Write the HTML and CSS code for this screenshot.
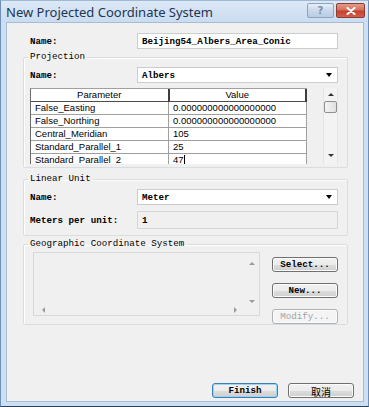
FILE: index.html
```html
<!DOCTYPE html>
<html lang="en">
<head>
  <meta charset="UTF-8">
  <title>New Projected Coordinate System</title>
  <link rel="stylesheet" href="styles.css">
</head>
<body>

  <div class="window">
    <div class="titlebar">
      <span class="title">New Projected Coordinate System</span>
      <div class="caption-buttons">
        <span class="cap-btn cap-help">?</span>
        <span class="cap-btn cap-close">
          <svg width="10" height="8" viewBox="0 0 10 8"><path d="M1.5 1 L8.5 7 M8.5 1 L1.5 7" stroke="#fff" stroke-width="2" stroke-linecap="round"/></svg>
        </span>
      </div>
    </div>

    <div class="client">
      <div class="field-row top-name">
        <label class="lbl">Name:</label>
        <div class="textbox">Beijing54_Albers_Area_Conic</div>
      </div>

      <fieldset class="group group-proj">
        <legend>Projection</legend>
        <div class="field-row">
          <label class="lbl">Name:</label>
          <div class="combo"><span>Albers</span><span class="drop-arrow"></span></div>
        </div>
        <div class="params">
          <div class="grid">
            <table>
              <thead>
                <tr><th>Parameter</th><th>Value</th></tr>
              </thead>
              <tbody>
                <tr><td>False_Easting</td><td>0.000000000000000000</td></tr>
                <tr><td>False_Northing</td><td>0.000000000000000000</td></tr>
                <tr><td>Central_Meridian</td><td>105</td></tr>
                <tr><td>Standard_Parallel_1</td><td>25</td></tr>
                <tr><td>Standard_Parallel_2</td><td>47<span class="caret"></span></td></tr>
              </tbody>
            </table>
          </div>
          <div class="vscroll">
            <span class="arrow-up"></span>
            <span class="thumb"></span>
            <span class="track"></span>
            <span class="arrow-down"></span>
          </div>
        </div>
      </fieldset>

      <fieldset class="group group-unit">
        <legend>Linear Unit</legend>
        <div class="field-row">
          <label class="lbl">Name:</label>
          <div class="combo"><span>Meter</span><span class="drop-arrow"></span></div>
        </div>
        <div class="field-row">
          <label class="lbl">Meters per unit:</label>
          <div class="textbox readonly">1</div>
        </div>
      </fieldset>

      <fieldset class="group group-gcs">
        <legend>Geographic Coordinate System</legend>
        <div class="gcs-body">
          <div class="listbox">
            <div class="list-content"></div>
            <div class="list-vbar">
              <span class="arrow-up gray"></span>
              <span class="arrow-down gray"></span>
            </div>
            <div class="list-hbar">
              <span class="arrow-left"></span>
              <span class="arrow-right"></span>
            </div>
            <div class="list-corner"></div>
          </div>
          <div class="gcs-buttons">
            <button class="btn">Select...</button>
            <button class="btn">New...</button>
            <button class="btn" disabled>Modify...</button>
          </div>
        </div>
      </fieldset>

      <div class="footer">
        <button class="btn btn-default">Finish</button>
        <button class="btn btn-cjk">取消</button>
      </div>
    </div>
  </div>

</body>
</html>
```

FILE: styles.css
```css
* {
  margin: 0;
  padding: 0;
  box-sizing: border-box;
}

html {
  background: #fff;
}

body {
  width: 369px;
  height: 407px;
  overflow: hidden;
}

.window {
  width: 369px;
  height: 407px;
  display: flex;
  flex-direction: column;
  background: #cddff2;
  border: 1px solid #6f8fb2;
  border-bottom-color: #2b3f55;
  border-top-color: #9fb8d3;
  padding: 0 4px 4px 5px;
}

.titlebar {
  height: 21px;
  display: flex;
  align-items: center;
  justify-content: space-between;
  margin: 0 -4px 0 -5px;
  padding: 0 3px 0 5px;
  background: linear-gradient(#dce8f6, #cadcf0);
}

.title {
  font-family: "Noto Sans", sans-serif;
  font-size: 13px;
  color: #1e3553;
}

.caption-buttons {
  display: flex;
  gap: 2px;
  align-self: flex-start;
  margin-top: 2px;
}

.cap-btn {
  height: 15px;
  display: flex;
  align-items: center;
  justify-content: center;
  border-radius: 2px;
}

.cap-help {
  width: 27px;
  border: 1px solid #8ba4c2;
  background: linear-gradient(#e6eef8, #c9d8ea 50%, #b9cce3);
  color: #7a8fa8;
  font-family: "DejaVu Sans", sans-serif;
  font-size: 10px;
  font-weight: bold;
}

.cap-close {
  width: 29px;
  border: 1px solid #8c3b32;
  background: linear-gradient(#e39c8a, #d4705c 45%, #c5412f 55%, #d55e46);
}

.client {
  flex: 1;
  display: flex;
  flex-direction: column;
  background: #f0f0f0;
  border: 1px solid #a7bbd2;
  padding: 10px 15px 3px 16px;
  font-family: "Liberation Mono", monospace;
  font-size: 9.2px;
  color: #000;
}

.field-row {
  display: flex;
  align-items: center;
}

.lbl {
  width: 107px;
  font-weight: bold;
}

.top-name {
  margin-left: 7px;
}

.textbox,
.combo {
  width: 201px;
  height: 16px;
  background: #fff;
  border: 1px solid #c9cdd2;
  display: flex;
  align-items: center;
  padding-left: 4px;
  font-weight: bold;
}

.textbox.readonly {
  height: 18px;
  background: #f0f0f0;
  border-color: #d6d6d6;
}

.combo {
  justify-content: space-between;
  padding-right: 5px;
}

.drop-arrow {
  width: 0;
  height: 0;
  border-left: 3.5px solid transparent;
  border-right: 3.5px solid transparent;
  border-top: 4px solid #000;
}

.group {
  border: 1px solid #d8dde2;
  border-radius: 2px;
  padding: 0 0 0 6px;
  box-shadow: inset 1px 1px 0 #fff;
}

.group legend {
  padding: 0 2px;
  margin-left: -2px;
  line-height: 10px;
  font-weight: normal;
}

.group-proj {
  margin-top: 3px;
  height: 116px;
}

.group-proj .field-row {
  margin-top: 5px;
}

.params {
  display: flex;
  margin-top: 5px;
  height: 77px;
}

.grid {
  width: 277px;
  height: 76px;
  overflow: hidden;
  border-left: 1px solid #6b6b6b;
  border-top: 1px solid #a0a0a0;
}

.grid table {
  width: 100%;
  border-collapse: collapse;
  font-family: "Liberation Sans", sans-serif;
  font-size: 9.5px;
  table-layout: fixed;
}

.grid th,
.grid td {
  height: 13px;
  padding: 0 0 0 4px;
  background: #fff;
  border-right: 1px solid #a0a0a0;
  border-bottom: 1px solid #a0a0a0;
  text-align: left;
  white-space: nowrap;
  line-height: 11px;
}

.grid th {
  height: 12px;
  font-weight: normal;
  text-align: center;
  padding: 0;
  border-bottom: 1px solid #4d4d4d;
  border-right: 2px solid #3c3c3c;
}

.caret {
  display: inline-block;
  width: 1px;
  height: 10px;
  background: #000;
  vertical-align: -2px;
}

.vscroll {
  width: 15px;
  height: 77px;
  margin-left: 16px;
  display: flex;
  flex-direction: column;
  align-items: center;
  border-left: 1px solid #e6e6e6;
  border-right: 1px solid #e6e6e6;
  background: #f3f3f3;
  padding-top: 5px;
}

.arrow-up,
.arrow-down {
  width: 0;
  height: 0;
  border-left: 3px solid transparent;
  border-right: 3px solid transparent;
}

.arrow-up {
  border-bottom: 3px solid #333;
}

.arrow-down {
  border-top: 3px solid #333;
}

.arrow-up.gray {
  border-bottom-color: #9a9a9a;
}

.arrow-down.gray {
  border-top-color: #9a9a9a;
}

.vscroll .thumb {
  width: 13px;
  height: 12px;
  margin-top: 5px;
  border: 1px solid #8e8f8f;
  border-radius: 2px;
  background: linear-gradient(90deg, #f4f4f4, #e0e0e0);
}

.vscroll .track {
  flex: 1;
}

.vscroll .arrow-down {
  margin-bottom: 8px;
}

.group-unit {
  margin-top: 6px;
  height: 62px;
}

.group-unit .field-row {
  margin-top: 5px;
}

.group-unit .field-row + .field-row {
  margin-top: 6px;
}

.group-gcs {
  margin-top: 3px;
  height: 86px;
}

.gcs-body {
  display: flex;
  margin-top: 3px;
}

.listbox {
  width: 227px;
  height: 64px;
  margin-left: 3px;
  border: 1px solid #d9d9d9;
  background: #f0f0f0;
  display: grid;
  grid-template-columns: 1fr 14px;
  grid-template-rows: 1fr 9px;
}

.list-vbar {
  grid-row: 1 / 3;
  grid-column: 2;
  display: flex;
  flex-direction: column;
  align-items: center;
  justify-content: space-between;
  padding: 9px 0 12px;
}

.list-content {
  grid-row: 1;
  grid-column: 1;
}

.list-hbar {
  grid-row: 2;
  grid-column: 1;
  display: flex;
  align-items: flex-start;
  justify-content: space-between;
  padding: 1px 8px 0 8px;
}

.list-corner {
  display: none;
}

.arrow-left,
.arrow-right {
  width: 0;
  height: 0;
  border-top: 3px solid transparent;
  border-bottom: 3px solid transparent;
}

.arrow-left {
  border-right: 3px solid #9a9a9a;
}

.arrow-right {
  border-left: 3px solid #9a9a9a;
}

.gcs-buttons {
  display: flex;
  flex-direction: column;
  gap: 11px;
  margin-left: 12px;
  margin-top: 5px;
}

.btn {
  width: 66px;
  height: 15px;
  border: 1px solid #707070;
  border-radius: 3px;
  background: linear-gradient(#f2f2f2, #ebebeb 50%, #dddddd 51%, #cfcfcf);
  font-family: "Liberation Mono", monospace;
  font-size: 9.2px;
  font-weight: bold;
  color: #000;
  box-shadow: inset 0 0 0 1px #fcfcfc;
}

.btn:disabled {
  border-color: #adb2b5;
  background: #f4f4f4;
  color: #a3a3a3;
  font-weight: normal;
}

.footer {
  margin-top: auto;
  margin-right: -6px;
  display: flex;
  justify-content: flex-end;
  gap: 10px;
}

.btn-default {
  border-color: #3c7fb1;
  box-shadow: inset 0 0 0 1px #9fd3f2;
}

.btn-cjk {
  font-family: "Noto Sans CJK SC", sans-serif;
  font-size: 10px;
  font-weight: normal;
}
```
